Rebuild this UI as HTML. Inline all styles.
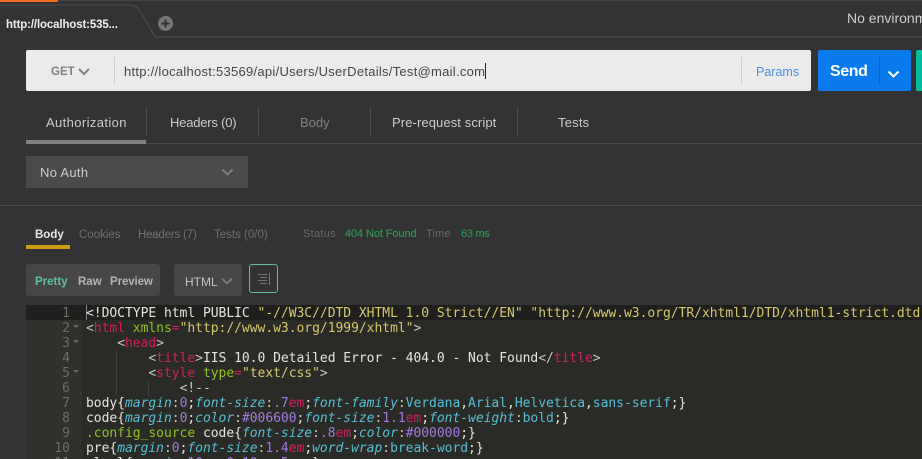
<!DOCTYPE html>
<html><head><meta charset="utf-8">
<style>
html,body{margin:0;padding:0;background:#333;}
#p{position:relative;width:922px;height:459px;overflow:hidden;background:#333;font-family:"Liberation Sans",sans-serif;color:#ccc;}
.a{position:absolute;white-space:nowrap;}
.t{font-size:13px;line-height:16px;}
.sep{position:absolute;width:1px;background:#4a4a4a;}
.code{position:absolute;left:86px;margin-top:1px;font:13px/15px "DejaVu Sans Mono",monospace;letter-spacing:-.03px;white-space:pre;color:#e6e6de;height:15px;}
.ln{position:absolute;left:26px;width:44px;margin-top:1px;text-align:right;font:13px/15px "DejaVu Sans Mono",monospace;color:#6e6e68;}
.k{color:#d0205f}.s{color:#d6c96e}.g{color:#8fc31f}.b{color:#55bfd6}.i{color:#55bfd6;font-style:italic}.n{color:#a07ae0}.w{color:#e6e6de}.d{color:#c8c8c0}
</style></head><body><div id="p">
<div class="a" style="left:0;top:0;width:922px;height:1px;background:#46404a"></div>
<div class="a" style="left:0;top:0;width:58px;height:2px;background:#f26b21"></div>

<svg class="a" style="left:0;top:0" width="922" height="40"><path d="M0 5H128Q136 5 140 11L155 37H922" fill="none" stroke="#4d4d4d" stroke-width="1"/></svg>
<div class="a" style="left:6px;top:16px;font-size:12px;line-height:16px;color:#f0f0f0;letter-spacing:-.1px;font-weight:bold;transform-origin:0 50%;transform:scaleX(.95)">http://localhost:535...</div>
<svg class="a" style="left:157px;top:15px" width="17" height="17"><circle cx="8.500" cy="8.500" r="7.500" fill="#777"/><path d="M8.500 4.500v8M4.500 8.500h8" stroke="#333" stroke-width="2"/></svg>
<div class="a" style="left:847px;top:10px;font-size:14px;line-height:16px;color:#cfcfcf">No environm</div>

<div class="a" style="left:26px;top:50px;width:785px;height:41px;background:#ebebeb;border-radius:2px"></div>
<div class="a" style="left:51px;top:64px;font-size:11.500px;line-height:16px;font-weight:bold;color:#808080">GET</div>
<svg class="a" style="left:78px;top:68px" width="12" height="8"><path d="M1 1L6 6L11 1" fill="none" stroke="#808080" stroke-width="2"/></svg>
<div class="a" style="left:114px;top:57px;width:1px;height:28px;background:#ccc"></div>
<div class="a" style="left:124px;top:64px;font-size:13px;line-height:16px;color:#444;letter-spacing:.27px">http://localhost:53569/api/Users/UserDetails/Test@mail.com</div>
<div class="a" style="left:485px;top:63px;width:1px;height:16px;background:#222"></div>
<div class="a" style="left:741px;top:57px;width:1px;height:28px;background:#ccc"></div>
<div class="a" style="left:756px;top:64px;font-size:12.500px;line-height:16px;color:#4a90e8">Params</div>

<div class="a" style="left:818px;top:50px;width:93px;height:41px;background:#097bed;border-radius:2px"></div>
<div class="a" style="left:830px;top:63px;font-size:16px;line-height:18px;font-weight:bold;color:#fff;letter-spacing:-.4px">Send</div>
<div class="a" style="left:879px;top:57px;width:1px;height:28px;background:#0a66c2"></div>
<svg class="a" style="left:887px;top:70px" width="13" height="9"><path d="M1.500 1.500L6.500 6.500L11.500 1.500" fill="none" stroke="#fff" stroke-width="2"/></svg>
<div class="a" style="left:916px;top:50px;width:6px;height:41px;background:#00bd9c;border-radius:2px 0 0 2px"></div>

<div class="a t" style="left:46px;top:115px;color:#ccc;letter-spacing:.38px">Authorization</div>
<div class="sep" style="left:146px;top:107px;height:29px"></div>
<div class="a t" style="left:170px;top:115px;color:#ccc;letter-spacing:-.2px">Headers (0)</div>
<div class="sep" style="left:258px;top:107px;height:29px"></div>
<div class="a t" style="left:300px;top:115px;color:#808080">Body</div>
<div class="sep" style="left:370px;top:107px;height:29px"></div>
<div class="a t" style="left:392px;top:115px;color:#ccc;letter-spacing:.1px">Pre-request script</div>
<div class="sep" style="left:517px;top:107px;height:29px"></div>
<div class="a t" style="left:558px;top:115px;color:#ccc;letter-spacing:.2px">Tests</div>
<div class="a" style="left:26px;top:143px;width:896px;height:1px;background:#4a4a4a"></div>
<div class="a" style="left:26px;top:140px;width:120px;height:4px;background:#808080"></div>

<div class="a" style="left:26px;top:156px;width:222px;height:32px;background:#4a4a4a"></div>
<div class="a t" style="left:40px;top:165px;color:#ccc;letter-spacing:.3px">No Auth</div>
<svg class="a" style="left:221px;top:168px" width="13" height="9"><path d="M1.500 1.500L6.500 6.500L11.500 1.500" fill="none" stroke="#808080" stroke-width="2"/></svg>
<div class="a" style="left:0;top:205px;width:922px;height:1px;background:#4a4a4a"></div>

<div class="a" style="left:35px;top:227px;font-size:11.500px;line-height:16px;font-weight:bold;color:#e6e6e6">Body</div>
<div class="a" style="left:79px;top:227px;font-size:11.500px;line-height:16px;color:#707070">Cookies</div>
<div class="a" style="left:138px;top:227px;font-size:11.500px;line-height:16px;color:#707070;letter-spacing:-.2px">Headers (7)</div>
<div class="a" style="left:214px;top:227px;font-size:11.500px;line-height:16px;color:#707070">Tests (0/0)</div>
<div class="a" style="left:26px;top:245px;width:44px;height:4px;background:#d19a16"></div>
<div class="a" style="left:303px;top:226px;font-size:11px;line-height:16px;color:#6a6a6a;letter-spacing:.3px">Status</div>
<div class="a" style="left:345px;top:226px;font-size:11px;line-height:16px;color:#2c9455;letter-spacing:-.1px;-webkit-text-stroke:.2px #2c9455">404 Not Found</div>
<div class="a" style="left:426px;top:226px;font-size:11px;line-height:16px;color:#6a6a6a;letter-spacing:.2px">Time</div>
<div class="a" style="left:461px;top:226px;font-size:11px;line-height:16px;color:#2c9455;letter-spacing:-.3px;-webkit-text-stroke:.2px #2c9455">63 ms</div>

<div class="a" style="left:26px;top:264px;width:134px;height:32px;background:#464646;border-radius:3px"></div>
<div class="a" style="left:35px;top:274px;font-size:11.500px;line-height:16px;font-weight:bold;color:#5fbfa0">Pretty</div>
<div class="a" style="left:78px;top:274px;font-size:11.500px;line-height:16px;font-weight:bold;color:#b4b4b4">Raw</div>
<div class="a" style="left:110px;top:274px;font-size:11.500px;line-height:16px;font-weight:bold;color:#b4b4b4;letter-spacing:-.1px">Preview</div>
<div class="a" style="left:174px;top:264px;width:68px;height:32px;background:#464646;border-radius:3px"></div>
<div class="a" style="left:185px;top:274px;font-size:12px;line-height:16px;color:#c4c4c4">HTML</div>
<svg class="a" style="left:221px;top:277px" width="12" height="8"><path d="M1 1.500L6 6.500L11 1.500" fill="none" stroke="#777" stroke-width="2"/></svg>
<div class="a" style="left:249px;top:264px;width:27px;height:27px;border:1px solid #5fbfa0;border-radius:3px"></div>
<svg class="a" style="left:258px;top:273px" width="14" height="12"><path d="M0 1.500H9M2 4.500H9M0 7.500H9M2 10.500H9" stroke="#777" stroke-width="1"/><path d="M11.500 0V12" stroke="#777"/></svg>

<div class="a" style="left:26px;top:305px;width:896px;height:154px;background:#2a2b26"></div>
<div class="a" style="left:26px;top:305px;width:56px;height:154px;background:#2f312c"></div>
<div class="a" style="left:26px;top:305px;width:896px;height:15px;background:#1f1f1d"></div>
<div class="a" style="left:86px;top:305px;width:1px;height:15px;background:#888"></div>

<div class="ln" style="top:305px">1</div>
<div class="ln" style="top:320px">2</div>
<div class="ln" style="top:335px">3</div>
<div class="ln" style="top:350px">4</div>
<div class="ln" style="top:365px">5</div>
<div class="ln" style="top:380px">6</div>
<div class="ln" style="top:395px">7</div>
<div class="ln" style="top:410px">8</div>
<div class="ln" style="top:425px">9</div>
<div class="ln" style="top:440px">10</div>
<div class="ln" style="top:455px">11</div>
<svg class="a" style="left:73px;top:325px" width="6" height="60"><path d="M0 0H6L3 3ZM0 15H6L3 18ZM0 45H6L3 48Z" fill="#666"/></svg>
<div class="a" style="left:116px;top:350px;width:0;height:45px;border-left:1px dotted #555"></div>
<div class="a" style="left:148px;top:380px;width:0;height:15px;border-left:1px dotted #555"></div>

<div class="code" style="top:305px"><span class="w">&lt;!DOCTYPE html PUBLIC </span><span class="s">"-//W3C//DTD XHTML 1.0 Strict//EN" "http://www.w3.org/TR/xhtml1/DTD/xhtml1-strict.dtd</span></div>
<div class="code" style="top:320px"><span class="d">&lt;</span><span class="k">html</span> <span class="g">xmlns</span><span class="k">=</span><span class="s">"http://www.w3.org/1999/xhtml"</span><span class="d">&gt;</span></div>
<div class="code" style="top:335px">    <span class="d">&lt;</span><span class="k">head</span><span class="d">&gt;</span></div>
<div class="code" style="top:350px">        <span class="d">&lt;</span><span class="k">title</span><span class="d">&gt;</span>IIS 10.0 Detailed Error - 404.0 - Not Found<span class="d">&lt;/</span><span class="k">title</span><span class="d">&gt;</span></div>
<div class="code" style="top:365px">        <span class="d">&lt;</span><span class="k">style</span> <span class="g">type</span><span class="k">=</span><span class="s">"text/css"</span><span class="d">&gt;</span></div>
<div class="code" style="top:380px">            <span class="d">&lt;!--</span></div>
<div class="code" style="top:395px">body{<span class="i">margin</span><span class="d">:</span><span class="n">0</span>;<span class="i">font-size</span><span class="d">:</span><span class="n">.7</span><span class="k">em</span>;<span class="i">font-family</span><span class="d">:</span><span class="b">Verdana</span>,<span class="b">Arial</span>,<span class="b">Helvetica</span>,<span class="b">sans-serif</span>;}</div>
<div class="code" style="top:410px">code{<span class="i">margin</span><span class="d">:</span><span class="n">0</span>;<span class="i">color</span><span class="d">:</span><span class="n">#006600</span>;<span class="i">font-size</span><span class="d">:</span><span class="n">1.1</span><span class="k">em</span>;<span class="i">font-weight</span><span class="d">:</span><span class="b">bold</span>;}</div>
<div class="code" style="top:425px"><span class="g">.config_source</span> code{<span class="i">font-size</span><span class="d">:</span><span class="n">.8</span><span class="k">em</span>;<span class="i">color</span><span class="d">:</span><span class="n">#000000</span>;}</div>
<div class="code" style="top:440px">pre{<span class="i">margin</span><span class="d">:</span><span class="n">0</span>;<span class="i">font-size</span><span class="d">:</span><span class="n">1.4</span><span class="k">em</span>;<span class="i">word-wrap</span><span class="d">:</span><span class="b">break-word</span>;}</div>
<div class="code" style="top:455px">ul,ol{<span class="i">margin</span><span class="d">:</span><span class="n">10</span><span class="k">px</span> <span class="n">0</span> <span class="n">10</span><span class="k">px</span> <span class="n">5</span><span class="k">px</span>;}</div>
</div></body></html>
